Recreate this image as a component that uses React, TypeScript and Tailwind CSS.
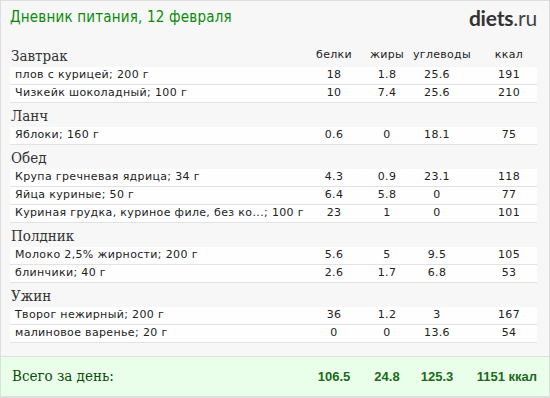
import React from "react";

type Item = { name: string; p: string; f: string; c: string; k: string };
type Meal = { title: string; items: Item[] };

const MEALS: Meal[] = [
    {
        title: "Завтрак",
        items: [
            { name: "плов с курицей; 200 г", p: "18", f: "1.8", c: "25.6", k: "191" },
            { name: "Чизкейк шоколадный; 100 г", p: "10", f: "7.4", c: "25.6", k: "210" },
        ],
    },
    {
        title: "Ланч",
        items: [{ name: "Яблоки; 160 г", p: "0.6", f: "0", c: "18.1", k: "75" }],
    },
    {
        title: "Обед",
        items: [
            { name: "Крупа гречневая ядрица; 34 г", p: "4.3", f: "0.9", c: "23.1", k: "118" },
            { name: "Яйца куриные; 50 г", p: "6.4", f: "5.8", c: "0", k: "77" },
            { name: "Куриная грудка, куриное филе, без ко...; 100 г", p: "23", f: "1", c: "0", k: "101" },
        ],
    },
    {
        title: "Полдник",
        items: [
            { name: "Молоко 2,5% жирности; 200 г", p: "5.6", f: "5", c: "9.5", k: "105" },
            { name: "блинчики; 40 г", p: "2.6", f: "1.7", c: "6.8", k: "53" },
        ],
    },
    {
        title: "Ужин",
        items: [
            { name: "Творог нежирный; 200 г", p: "36", f: "1.2", c: "3", k: "167" },
            { name: "малиновое варенье; 20 г", p: "0", f: "0", c: "13.6", k: "54" },
        ],
    },
];

const GRID = "grid grid-cols-[1fr_54px_52px_48px_76px] items-center";

export default function App() {
    return (
        <div className="w-[550px] h-[398px] bg-[#f7f7f7] border border-[#dedede] flex flex-col font-['DejaVu_Sans',sans-serif] text-[#222] overflow-hidden">
            {/* Header */}
            <div className="flex items-start justify-between pl-[9px] pr-[12px] pt-[6px] h-[40px]">
                <h1 className="text-[15px] leading-[20px] tracking-[0.2px] text-[#0a8a0a] font-['DejaVu_Sans_Condensed','DejaVu_Sans',sans-serif]">
                    Дневник питания, 12 февраля
                </h1>
                <div className="text-[21px] leading-[22px] text-[#333] font-['Lato',sans-serif] tracking-[-0.2px]">
                    <span className="font-bold">diets</span>
                    <span className="text-[#444]">.ru</span>
                </div>
            </div>

            {/* Meals */}
            <div className="pl-[9px] pr-[12px] flex flex-col">
                {MEALS.map((meal, i) => (
                    <div key={meal.title} className="flex flex-col">
                        <div className={`${GRID} h-[24px] ${i === 0 ? "mt-[2px]" : ""}`}>
                            <span className="font-['DejaVu_Serif_Condensed','DejaVu_Serif',serif] text-[15px] leading-[20px] text-[#333] self-end pb-[1px] pl-[1px]">
                                {meal.title}
                            </span>
                            {i === 0 ? (
                                <>
                                    <span className="text-[11px] text-center tracking-[0.3px]">белки</span>
                                    <span className="text-[11px] text-center tracking-[0.3px]">жиры</span>
                                    <span className="text-[11px] text-center tracking-[0.3px]">углеводы</span>
                                    <span className="text-[11px] text-center tracking-[0.3px] pl-[20px]">ккал</span>
                                </>
                            ) : null}
                        </div>
                        {meal.items.map((it) => (
                            <div
                                key={it.name}
                                className={`${GRID} h-[18px] bg-[#fefefe] border-b border-[#e2e2e2] text-[11px] tracking-[0.35px]`}
                            >
                                <span className="pl-[5px] whitespace-nowrap">{it.name}</span>
                                <span className="text-center">{it.p}</span>
                                <span className="text-center">{it.f}</span>
                                <span className="text-center">{it.c}</span>
                                <span className="text-center pl-[20px]">{it.k}</span>
                            </div>
                        ))}
                    </div>
                ))}
            </div>

            {/* Totals */}
            <div className="mt-auto h-[41px] bg-[#eaffea] border-t border-b border-[#dedede] pl-[11px] pr-[12px]">
                <div className={`${GRID} h-full`}>
                    <span className="font-['DejaVu_Serif_Condensed','DejaVu_Serif',serif] text-[15px] text-[#0b4d0b]">Всего за день:</span>
                    <span className="text-center font-['Liberation_Sans',sans-serif] font-bold text-[13px] text-[#1a6a1a]">106.5</span>
                    <span className="text-center font-['Liberation_Sans',sans-serif] font-bold text-[13px] text-[#1a6a1a]">24.8</span>
                    <span className="text-center font-['Liberation_Sans',sans-serif] font-bold text-[13px] text-[#1a6a1a]">125.3</span>
                    <span className="text-right font-['Liberation_Sans',sans-serif] font-bold text-[13px] text-[#1a6a1a]">1151 ккал</span>
                </div>
            </div>
        </div>
    );
}
